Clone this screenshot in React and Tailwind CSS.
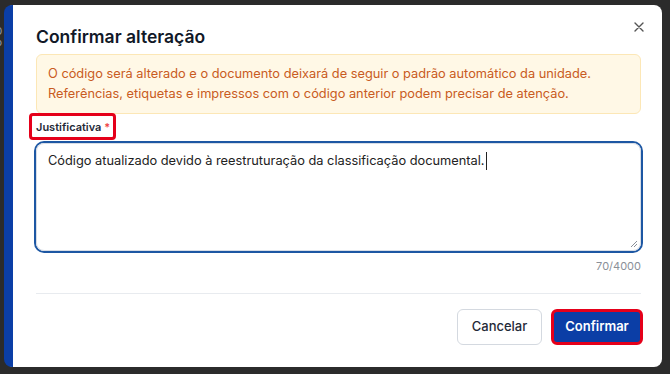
import React from "react";

const App = () => {
  return (
    <div
      className="flex h-[374px] w-[670px] overflow-hidden bg-[#2b2b2b]"
      style={{ fontFamily: "Inter, 'Liberation Sans', sans-serif" }}
    >
      <div className="w-[4px] shrink-0 overflow-hidden pt-[26px] text-[10px] leading-[11px] text-gray-400">
        <div className="-ml-[5px]">D</div>
        <div className="-ml-[4px]">o</div>
      </div>

      <div className="mt-[5px] flex h-[362px] w-[658px] shrink-0 flex-col rounded-lg border-l-[9px] border-[#0b3ea6] bg-white pl-[23px] pr-[21px] pt-[18px]">
        <div className="flex items-center justify-between">
          <h2 className="text-[17.5px] font-semibold leading-7 text-[#111827]">Confirmar alteração</h2>
          <button className="-mt-[20px] mr-[-4px] text-[#555]">
            <svg width="12" height="12" viewBox="0 0 12 12" fill="none" stroke="currentColor" strokeWidth="1.4" strokeLinecap="round">
              <path d="M2 2l8 8M10 2l-8 8" />
            </svg>
          </button>
        </div>

        <div className="mt-[3px] whitespace-nowrap rounded-md border border-[#fce7b6] bg-[#fff8e6] px-[11px] py-[9px] text-[12.8px] leading-5 text-[#c95b22]">
          O código será alterado e o documento deixará de seguir o padrão automático da unidade.
          <br />
          Referências, etiquetas e impressos com o código anterior podem precisar de atenção.
        </div>

        <div className="mt-[5px] flex">
          <label className="relative block text-[11px] font-semibold leading-4 text-[#1f2937]">
            Justificativa <span className="text-[#ef4444]">*</span>
            <span className="absolute -bottom-[5px] -left-[7px] -right-[6px] -top-[6px] rounded-[4px] border-[3px] border-[#e5001a]" />
          </label>
        </div>

        <div className="relative mt-[8px] flex h-[108px] rounded-lg border border-[#d7dde6] px-[11px] pt-[7px] text-[12.8px] leading-5 text-[#222] ring-2 ring-[#1d57a3]">
          <span>Código atualizado devido à reestruturação da classificação documental.</span>
          <span className="ml-[1px] mt-[1px] h-[18px] w-[1px] bg-[#222]" />
          <svg className="absolute bottom-[2px] right-[2px]" width="8" height="8" viewBox="0 0 8 8" fill="none" stroke="#8a8f98" strokeWidth="1">
            <path d="M7 1L1 7M7 4L4 7" />
          </svg>
        </div>

        <div className="mt-[7px] text-right text-[11px] leading-4 text-[#8a8f98]">70/4000</div>

        <div className="mt-[19px] h-px bg-[#e8ebef]" />

        <div className="mt-[15px] flex justify-end gap-[9px]">
          <button className="h-[36px] w-[85px] rounded-md border border-[#d4d9e0] bg-white text-[13px] font-medium text-[#1f2937]">
            Cancelar
          </button>
          <button className="-mr-[2px] h-[36px] w-[92px] rounded-md border-[3px] border-[#e5001a] bg-[#0b3ea6] text-[13px] font-semibold text-white">
            Confirmar
          </button>
        </div>
      </div>
    </div>
  );
};

export default App;
